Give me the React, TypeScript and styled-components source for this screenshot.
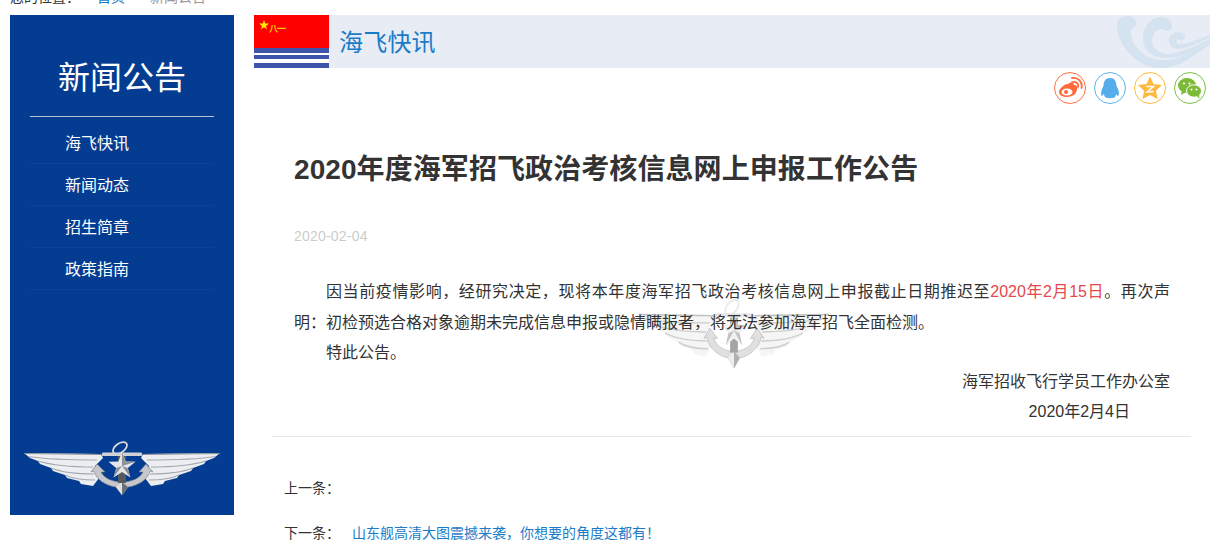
import styled, { createGlobalStyle } from "styled-components";

const GlobalStyle = createGlobalStyle`
    html, body {
        margin: 0;
        padding: 0;
        background: #fff;
        overflow: hidden;
    }

    body {
        font-family: "Liberation Sans", "Noto Sans CJK SC", sans-serif;
        color: #333;
    }
`;

const Page = styled.div`
    width: 1224px;
    height: 547px;
    overflow: hidden;
`;

const Crumb = styled.div`
    display: flex;
    height: 28px;
    margin-top: -13px;
    padding-left: 10px;
    line-height: 20px;
    font-size: 14px;
    color: #333;
`;

const CrumbHome = styled.span`
    margin-left: 17px;
    color: #1a7cc9;
`;

const CrumbCurrent = styled.span`
    margin-left: 25px;
    color: #999;
`;

const Columns = styled.div`
    display: flex;
    align-items: flex-start;
    gap: 20px;
    padding-left: 10px;
`;

const Sidebar = styled.aside`
    display: flex;
    flex-direction: column;
    width: 224px;
    height: 500px;
    background: #033c91;
`;

const SidebarTitle = styled.h2`
    margin: 0 20px;
    height: 102px;
    padding-top: 38px;
    box-sizing: border-box;
    border-bottom: 1px solid #b5c2da;
    font-size: 32px;
    font-weight: 400;
    line-height: 50px;
    text-align: center;
    color: #fff;
`;

const Menu = styled.ul`
    margin: 5px 20px 0;
    padding: 0;
    list-style: none;
`;

const MenuItem = styled.li`
    height: 42px;
    box-sizing: border-box;
    padding: 1px 0 0 35px;
    border-bottom: 1px solid #0a429c;
    font-size: 16px;
    line-height: 42px;
    color: #fff;
`;

const SidebarBadge = styled.div`
    display: flex;
    justify-content: center;
    margin-top: auto;
    padding-bottom: 17px;
`;

const Main = styled.main`
    width: 956px;
`;

const Banner = styled.header`
    position: relative;
    display: flex;
    align-items: center;
    gap: 10px;
    height: 53px;
    overflow: hidden;
    background: #e8ecf5;
`;

const BannerTitle = styled.h3`
    margin: 0;
    padding-bottom: 3px;
    font-size: 24px;
    font-weight: 400;
    letter-spacing: 0.2px;
    color: #1a7cc9;
`;

const WaveMark = styled.svg`
    position: absolute;
    top: 0;
    right: 0;
`;

const ShareRow = styled.div`
    display: flex;
    justify-content: flex-end;
    gap: 8px;
    margin-top: 4px;
    padding-right: 4px;
`;

const ShareButton = styled.span<{ $color: string }>`
    display: flex;
    align-items: center;
    justify-content: center;
    width: 32px;
    height: 32px;
    box-sizing: border-box;
    border: 1px solid ${p => p.$color};
    border-radius: 50%;
`;

const Article = styled.article`
    position: relative;
    padding: 0 20px 0 40px;
`;

const Watermark = styled.div`
    position: absolute;
    top: 193px;
    left: 384px;
    opacity: 0.55;
    filter: grayscale(1);
`;

const Headline = styled.h1`
    margin: 0;
    padding-top: 45px;
    font-size: 28px;
    font-weight: 700;
    line-height: 42px;
    letter-spacing: 0.08px;
    color: #333;
`;

const DateLine = styled.div`
    margin-top: 35px;
    font-size: 14px;
    line-height: 20px;
    letter-spacing: 0.2px;
    color: #ccc;
`;

const Body = styled.div`
    position: relative;
    margin-top: 31px;
    padding-right: 20px;
    font-size: 16px;
    line-height: 30.5px;
    color: #333;
`;

const Paragraph = styled.p`
    margin: 0;
    text-indent: 32px;
    text-align: justify;
`;

const Highlight = styled.span`
    color: #e5484d;
`;

const Signature = styled.div<{ $inset: number }>`
    padding-right: ${p => p.$inset}px;
    text-align: right;

    &:nth-child(3) {
        margin-top: -2px;
    }
`;

const Pager = styled.nav`
    position: relative;
    margin: 8px 0 0 -22px;
    width: 907px;
    padding: 0 0 0 12px;
    border-top: 1px solid #e8e8f0;
    font-size: 14px;
    color: #333;
`;

const PagerRow = styled.div`
    display: flex;
    height: 45px;
    line-height: 20px;

    &:first-child {
        margin-top: 41px;
    }
`;

const PagerLabel = styled.span`
    width: 68px;
`;

const PagerLink = styled.a`
    color: #1a7cc9;
    text-decoration: none;
`;

const menuItems = ["海飞快讯", "新闻动态", "招生简章", "政策指南"];

function WingFeathers() {
    return (
        <g>
            <path
                d="M1 13 L78 14 L80 18 L72 26 L76 38 L70 46 L58 44 L56 41 L44 38 L42 35 L30 31 L28 28 L17 24 L15 21 L7 18 Z"
                fill="#eceef1"
            />
            <path
                d="M5 16.5 C28 20 52 20 74 20 M15 21 C32 26 52 27 70 27 M28 28 C38 32 52 34 71 34 M42 35 C48 38 58 40 72 40"
                fill="none"
                stroke="#a4a8ae"
                strokeWidth="1.1"
            />
            <path d="M1 13.5 L78 14.5" stroke="#8d9197" strokeWidth="1.2" />
        </g>
    );
}

// 海军航空兵徽章，侧栏和正文水印共用
function WingBadge({ width, height }: { width: number; height: number }) {
    return (
        <svg width={width} height={height} viewBox="0 0 198 58" preserveAspectRatio="none">
            <WingFeathers />
            <g transform="translate(198 0) scale(-1 1)">
                <WingFeathers />
            </g>
            <ellipse
                cx="97"
                cy="8"
                rx="8"
                ry="4.5"
                transform="rotate(-35 97 8)"
                fill="none"
                stroke="#d8dade"
                strokeWidth="1.8"
            />
            <rect x="79" y="12.5" width="40" height="3.4" rx="1" fill="#d0d2d6" />
            <path
                d="M99 55 L93 47 C84 46 73 40 71 31 L68 32 L74 24 L82 32 L78 32 C81 38 88 41 96 42 L102 42 C110 41 117 38 120 32 L116 32 L123 24 L130 32 L127 31 C125 40 114 46 105 47 Z"
                fill="#c4c7cc"
                stroke="#7b7f85"
                strokeWidth="0.6"
            />
            <path d="M99 42 L105 47 L99 55 Z" fill="#6c7076" />
            <path d="M93 47 L99 42 L99 55 Z" fill="#dfe1e4" />
            <rect x="95" y="16" width="8" height="27" fill="#565a60" />
            <path
                d="M99 12 L102.6 21.5 L112.5 21.8 L104.8 28 L107.4 37.5 L99 32 L90.6 37.5 L93.2 28 L85.5 21.8 L95.4 21.5 Z"
                fill="#e4e6e9"
            />
            <path
                d="M99 12 L102.6 21.5 L112.5 21.8 L99 26 Z M104.8 28 L107.4 37.5 L99 26 Z M90.6 37.5 L93.2 28 L99 26 Z"
                fill="#8f9399"
            />
        </svg>
    );
}

function FlagMark() {
    return (
        <svg width="75" height="53" viewBox="0 0 75 53">
            <rect width="75" height="33" fill="#fe0000" />
            <rect y="33" width="75" height="5" fill="#4053ab" />
            <rect y="38" width="75" height="2" fill="#fff" />
            <rect y="40" width="75" height="4" fill="#4053ab" />
            <rect y="44" width="75" height="4" fill="#fff" />
            <rect y="48" width="75" height="5" fill="#4053ab" />
            <path
                d="M10 5 L11.3 8.6 L15 8.6 L12 10.9 L13.1 14.5 L10 12.3 L6.9 14.5 L8 10.9 L5 8.6 L8.7 8.6 Z"
                fill="#ffea00"
            />
            <text
                x="15"
                y="17"
                fontSize="9"
                fontWeight="700"
                letterSpacing="-1"
                fill="#ffc400"
                fontFamily="Noto Sans CJK SC"
            >
                八一
            </text>
        </svg>
    );
}

function WaveDecoration() {
    return (
        <WaveMark width="94" height="53" viewBox="0 0 94 53">
            <g fill="#d5e2f0">
                <path d="M1 10 C1 4 6 1 12 1 C18 1 21 6 20 10 C19 13 15 13 15 17 C15 30 26 40 38 44 C50 47 62 44 72 38 L94 27 L94 30 C80 37 70 50 50 53 L40 53 C20 50 1 30 1 10 Z" />
                <path d="M27 24 C27 10 36 2 45 2 C52 2 57 7 56 12 C55 16 50 17 47 14 C40 14 36 20 36 26 C36 34 44 39 52 39 C64 39 80 30 94 24 L94 26 C80 34 66 43 52 43 C38 43 27 36 27 24 Z" />
                <path d="M53 25 C53 20 58 17 62 17 C67 17 70 20 69 23 C68 26 64 26 62 24 C60 25 60 28 62 29 C72 29 84 24 94 20 L94 22 C84 27 72 34 62 34 C56 34 53 30 53 25 Z" />
            </g>
        </WaveMark>
    );
}

function WeiboIcon() {
    return (
        <svg width="26" height="26" viewBox="0 0 26 26">
            <path
                d="M11 9 C14 7 17 7 17 10 C20 10 21 12 20 14 C20 19 15 22 10 22 C6 22 2 20 2 17 C2 14 7 9 11 9 Z"
                fill="#ff6a3c"
            />
            <ellipse cx="10" cy="17" rx="5.5" ry="3.6" fill="#fff" />
            <circle cx="9" cy="17" r="2" fill="#ff6a3c" />
            <path
                d="M15 7 C19 6 22 9 21 12 M15 3 C21 2 26 7 24.5 13"
                fill="none"
                stroke="#ff6a3c"
                strokeWidth="1.8"
                strokeLinecap="round"
            />
        </svg>
    );
}

function QqIcon() {
    return (
        <svg width="26" height="26" viewBox="0 0 26 26">
            <path
                d="M13 3 C17.5 3 19.5 6.5 19.5 11 C21.5 14 22.5 18 21.5 21 C20.5 21 19.8 20 19.3 19 C18.8 20.5 18 22 17.5 22.5 C15 23.5 11 23.5 8.5 22.5 C8 22 7.2 20.5 6.7 19 C6.2 20 5.5 21 4.5 21 C3.5 18 4.5 14 6.5 11 C6.5 6.5 8.5 3 13 3 Z"
                fill="#55adec"
            />
        </svg>
    );
}

function QzoneIcon() {
    return (
        <svg width="26" height="26" viewBox="0 0 26 26">
            <path
                d="M13 1.5 L16.5 9 L25 10 L19 15.8 L20.5 24 L13 20 L5.5 24 L7 15.8 L1 10 L9.5 9 Z"
                fill="#fdb940"
            />
            <path
                d="M9.5 11.5 L16.5 11.5 L10 17 L16.5 16.5"
                fill="none"
                stroke="#fff"
                strokeWidth="1.5"
            />
        </svg>
    );
}

function WechatIcon() {
    return (
        <svg width="26" height="26" viewBox="0 0 26 26">
            <ellipse cx="10" cy="10.5" rx="9" ry="7.5" fill="#7cbb38" />
            <path d="M5 15 L4 20 L9 17 Z" fill="#7cbb38" />
            <ellipse cx="17" cy="16" rx="7.5" ry="6.2" fill="#7cbb38" stroke="#fff" strokeWidth="1" />
            <path d="M20 21 L22.5 24 L22 19 Z" fill="#7cbb38" />
            <circle cx="7" cy="8.5" r="1.1" fill="#fff" />
            <circle cx="12.5" cy="8.5" r="1.1" fill="#fff" />
            <circle cx="14.5" cy="14.5" r="1" fill="#fff" />
            <circle cx="19.5" cy="14.5" r="1" fill="#fff" />
        </svg>
    );
}

export default function App() {
    return (
        <Page>
            <GlobalStyle />
            <Crumb>
                <span>您的位置：</span>
                <CrumbHome>首页</CrumbHome>
                <CrumbCurrent>新闻公告</CrumbCurrent>
            </Crumb>
            <Columns>
                <Sidebar>
                    <SidebarTitle>新闻公告</SidebarTitle>
                    <Menu>
                        {menuItems.map(item => (
                            <MenuItem key={item}>{item}</MenuItem>
                        ))}
                    </Menu>
                    <SidebarBadge>
                        <WingBadge width={198} height={58} />
                    </SidebarBadge>
                </Sidebar>
                <Main>
                    <Banner>
                        <FlagMark />
                        <BannerTitle>海飞快讯</BannerTitle>
                        <WaveDecoration />
                    </Banner>
                    <ShareRow>
                        <ShareButton $color="#ff7043">
                            <WeiboIcon />
                        </ShareButton>
                        <ShareButton $color="#5ab4ea">
                            <QqIcon />
                        </ShareButton>
                        <ShareButton $color="#fdbb3f">
                            <QzoneIcon />
                        </ShareButton>
                        <ShareButton $color="#7cc04a">
                            <WechatIcon />
                        </ShareButton>
                    </ShareRow>
                    <Article>
                        <Watermark>
                            <WingBadge width={192} height={75} />
                        </Watermark>
                        <Headline>2020年度海军招飞政治考核信息网上申报工作公告</Headline>
                        <DateLine>2020-02-04</DateLine>
                        <Body>
                            <Paragraph>
                                因当前疫情影响，经研究决定，现将本年度海军招飞政治考核信息网上申报截止日期推迟至
                                <Highlight>2020年2月15日</Highlight>
                                。再次声明：初检预选合格对象逾期未完成信息申报或隐情瞒报者，将无法参加海军招飞全面检测。
                            </Paragraph>
                            <Paragraph>特此公告。</Paragraph>
                            <Signature $inset={0}>海军招收飞行学员工作办公室</Signature>
                            <Signature $inset={40}>2020年2月4日</Signature>
                        </Body>
                        <Pager>
                            <PagerRow>
                                <PagerLabel>上一条：</PagerLabel>
                            </PagerRow>
                            <PagerRow>
                                <PagerLabel>下一条：</PagerLabel>
                                <PagerLink>山东舰高清大图震撼来袭，你想要的角度这都有！</PagerLink>
                            </PagerRow>
                        </Pager>
                    </Article>
                </Main>
            </Columns>
        </Page>
    );
}
